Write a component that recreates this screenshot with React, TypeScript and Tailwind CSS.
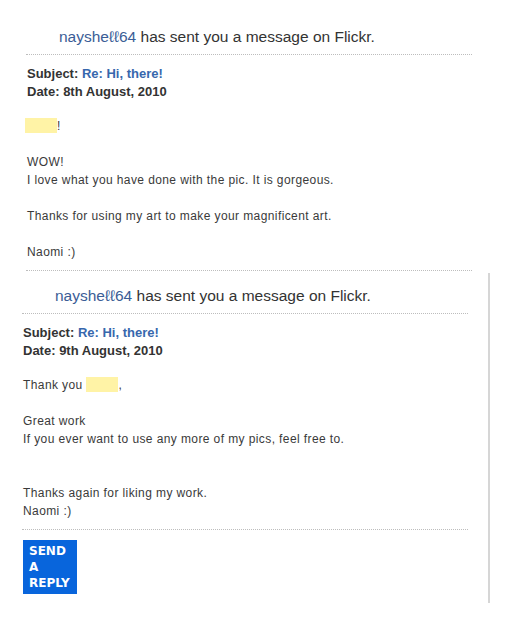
import type { ReactNode } from "react";

type Msg = {
  date: string;
  body: ReactNode;
};

function Hidden({ className = "" }: { className?: string }) {
  return <span className={`inline-block h-[15px] w-[32px] bg-[#fff3a6] align-[-3px] ${className}`} />;
}

function Message({ date, body }: Msg) {
  return (
    <div className="w-[446px]">
      <div className="border-b border-dotted border-[#bdbdbd] pb-[8px] pl-[33px] text-[15.5px] leading-[18px] text-[#333]">
        <span className="text-[#3b5d96]">naysheℓℓ64</span> has sent you a message on Flickr.
      </div>
      <div className="mt-[10px] pl-px text-[13px] font-bold leading-[18px] text-[#333]">
        <div>
          Subject: <span className="text-[#3767ad]">Re: Hi, there!</span>
        </div>
        <div>Date: {date}</div>
      </div>
      <div className="mt-[16px] border-b border-dotted border-[#bdbdbd] pb-[9px] pl-px text-[12px] leading-[18px] tracking-[0.4px] text-[#3a3a3a]">
        {body}
      </div>
    </div>
  );
}

export default function App() {
  return (
    <div className="min-h-[642px] w-[510px] bg-white font-['Liberation_Sans',Arial,sans-serif]">
      <div className="pl-[26px] pt-[28px]">
        <Message
          date="8th August, 2010"
          body={
            <>
              <div>
                <Hidden className="-ml-[2px]" />!
              </div>
              <div>&nbsp;</div>
              <div>WOW!</div>
              <div>I love what you have done with the pic. It is gorgeous.</div>
              <div>&nbsp;</div>
              <div>Thanks for using my art to make your magnificent art.</div>
              <div>&nbsp;</div>
              <div>Naomi :)</div>
            </>
          }
        />
      </div>

      <div className="mt-[2px] w-[490px] border-r-2 border-[#d6d6d6] pb-[9px] pl-[22px] pt-[14px]">
        <Message
          date="9th August, 2010"
          body={
            <>
              <div>
                Thank you <Hidden />,
              </div>
              <div>&nbsp;</div>
              <div>Great work</div>
              <div>If you ever want to use any more of my pics, feel free to.</div>
              <div>&nbsp;</div>
              <div>&nbsp;</div>
              <div>Thanks again for liking my work.</div>
              <div>Naomi :)</div>
            </>
          }
        />
        <button
          type="button"
          className="mt-[10px] ml-px block w-[54px] bg-[#0865dc] px-[6px] py-[3px] text-left font-['DejaVu_Sans',Verdana,sans-serif] text-[12px] font-bold leading-[16px] text-white"
        >
          SEND A REPLY
        </button>
      </div>
    </div>
  );
}
